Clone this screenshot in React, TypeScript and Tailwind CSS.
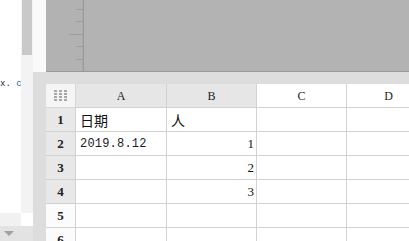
const cols = [
  { key: "A", width: "w-[91px]", active: true },
  { key: "B", width: "w-[90px]", active: true },
  { key: "C", width: "w-[90px]", active: false },
  { key: "D", width: "w-[84px]", active: false },
];

type Cell = { text?: string; align?: "left" | "right"; kind?: "cjk" | "date" | "num" };

const rows: { n: number; active: boolean; cells: Cell[] }[] = [
  { n: 1, active: true, cells: [{ text: "日期", kind: "cjk" }, { text: "人", kind: "cjk" }, {}, {}] },
  { n: 2, active: true, cells: [{ text: "2019.8.12", kind: "date" }, { text: "1", align: "right", kind: "num" }, {}, {}] },
  { n: 3, active: true, cells: [{}, { text: "2", align: "right", kind: "num" }, {}, {}] },
  { n: 4, active: true, cells: [{}, { text: "3", align: "right", kind: "num" }, {}, {}] },
  { n: 5, active: false, cells: [{}, {}, {}, {}] },
  { n: 6, active: false, cells: [{}, {}, {}, {}] },
];

const serif = "font-['Liberation_Serif','Noto_Sans_CJK_SC',serif]";

function Ruler() {
  // ruler strip on the left of the gray preview area
  return (
    <svg width="38" height="71" className="block">
      <rect x="0" y="0" width="38" height="71" fill="#b2b2b2" />
      <line x1="37.5" y1="0" x2="37.5" y2="71" stroke="#9a9a9a" strokeWidth="1.5" />
      {[9, 21, 46, 59].map((y) => (
        <line key={y} x1="30" y1={y + 0.5} x2="37" y2={y + 0.5} stroke="#9e9e9e" strokeWidth="1" />
      ))}
      <line x1="23" y1="34.5" x2="37" y2="34.5" stroke="#9e9e9e" strokeWidth="1" />
    </svg>
  );
}

function CornerIcon() {
  return (
    <svg width="14" height="12" viewBox="0 0 14 12">
      {[0, 1, 2].map((c) =>
        [0, 1, 2, 3].map((r) => (
          <rect key={`${c}-${r}`} x={c * 5} y={r * 3} width="3" height="2" fill="#a8a8a8" />
        ))
      )}
    </svg>
  );
}

function CellText({ cell }: { cell: Cell }) {
  if (!cell.text) return null;
  if (cell.kind === "cjk") {
    return <span className="font-['Noto_Sans_CJK_SC',sans-serif] text-[14px] leading-none text-[#111]">{cell.text}</span>;
  }
  if (cell.kind === "date") {
    return <span className="font-['Liberation_Mono',monospace] text-[12px] leading-none tracking-[0.2px] text-[#1b1b2a]">{cell.text}</span>;
  }
  return <span className={`${serif} text-[13px] leading-none text-[#111122]`}>{cell.text}</span>;
}

export default function App() {
  return (
    <div className="flex h-[241px] w-[409px] overflow-hidden bg-white">
      {/* left file panel */}
      <div className="flex w-[33px] flex-col">
        <div className="flex h-[213px]">
          <div className="w-[21px] overflow-hidden bg-white pt-[68px]">
            <span className="font-['Liberation_Mono',monospace] text-[9px] leading-none whitespace-nowrap text-[#222240]">
              x. <span className="text-[#2a5aa8]">c</span>
            </span>
          </div>
          <div className="w-[12px] bg-[#f3f3f3]">
            <div className="mx-[1px] h-[55px] bg-[#c9c9c9]" />
          </div>
        </div>
        <div className="flex h-[13px]">
          <div className="w-[21px] bg-[#f1f1f1]" />
          <div className="w-[12px] bg-white" />
        </div>
        <div className="flex h-[15px] items-center bg-[#e3e3e3] pl-[4px]">
          <div className="h-0 w-0 border-x-[5px] border-t-[5px] border-x-transparent border-t-[#a0a0a0]" />
        </div>
      </div>

      {/* spreadsheet preview */}
      <div className="flex flex-1 flex-col">
        <div className="flex h-[72px]">
          <div className="w-[13px] bg-[#fafafa]" />
          <div className="flex flex-1 border-b border-[#9a9a9a] bg-[#b3b3b3]">
            <Ruler />
          </div>
        </div>
        <div className="flex-1 bg-[#dddddd] pl-[13px] pt-[12px]">
          <div className="flex h-[24px]">
            <div className="flex w-[30px] items-center justify-center border-r border-b border-[#d6d6d6] bg-[#f5f5f5]">
              <CornerIcon />
            </div>
            {cols.map((c) => (
              <div
                key={c.key}
                className={`flex ${c.width} shrink-0 items-center justify-center border-r border-b border-[#d2d2d2] ${serif} text-[12px] text-[#222] ${
                  c.active ? "bg-[#e6e6e6]" : "bg-white"
                }`}
              >
                {c.key}
              </div>
            ))}
          </div>
          {rows.map((r) => (
            <div key={r.n} className="flex h-[24px]">
              <div
                className={`flex w-[30px] shrink-0 items-center justify-center border-r border-b border-[#d2d2d2] ${serif} text-[13px] font-semibold text-[#222] ${
                  r.active ? "bg-[#e8e8e8]" : "bg-[#fbfbfb]"
                }`}
              >
                {r.n}
              </div>
              {r.cells.map((cell, i) => (
                <div
                  key={i}
                  className={`flex ${cols[i].width} shrink-0 items-center border-r border-b border-[#d2d2d2] bg-white ${
                    cell.align === "right" ? "justify-end pr-[2px]" : "justify-start pl-[4px]"
                  }`}
                >
                  <CellText cell={cell} />
                </div>
              ))}
            </div>
          ))}
        </div>
      </div>
    </div>
  );
}
